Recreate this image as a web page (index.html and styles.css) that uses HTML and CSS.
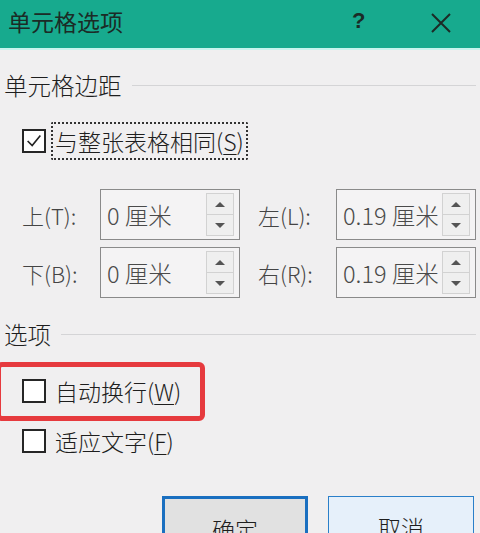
FILE: index.html
```html
<!DOCTYPE html>
<html lang="zh-CN">
<head>
<meta charset="utf-8">
<title>单元格选项</title>
<link rel="stylesheet" href="styles.css">
</head>
<body>
<div class="dialog">
  <div class="titlebar">
    <span class="title">单元格选项</span>
    <span class="help">?</span>
    <span class="close">
      <svg width="22" height="22" viewBox="0 0 22 22"><path d="M2 2 L20 20 M20 2 L2 20" stroke="#1c2a26" stroke-width="2" fill="none"/></svg>
    </span>
  </div>
  <div class="content">
    <div class="section-head"><span class="section-label">单元格边距</span><span class="rule"></span></div>
    <div class="check-row first">
      <span class="checkbox">
        <svg width="22" height="22" viewBox="0 0 22 22"><path d="M4 11 L9 16 L18 5" stroke="#222" stroke-width="1.8" fill="none"/></svg>
      </span>
      <span class="check-label focus">与整张表格相同(<u>S</u>)</span>
    </div>
    <div class="margins">
      <span class="field-label">上(T):</span>
      <div class="spin"><span class="spin-value">0 厘米</span><span class="spin-btns"><span class="sb up"></span><span class="sb down"></span></span></div>
      <span class="field-label">左(L):</span>
      <div class="spin"><span class="spin-value">0.19 厘米</span><span class="spin-btns"><span class="sb up"></span><span class="sb down"></span></span></div>
      <span class="field-label">下(B):</span>
      <div class="spin"><span class="spin-value">0 厘米</span><span class="spin-btns"><span class="sb up"></span><span class="sb down"></span></span></div>
      <span class="field-label">右(R):</span>
      <div class="spin"><span class="spin-value">0.19 厘米</span><span class="spin-btns"><span class="sb up"></span><span class="sb down"></span></span></div>
    </div>
    <div class="section-head second"><span class="section-label">选项</span><span class="rule"></span></div>
    <div class="options">
      <div class="highlight"></div>
      <div class="check-row wrap">
        <span class="checkbox"></span>
        <span class="check-label">自动换行(<u>W</u>)</span>
      </div>
      <div class="check-row fit">
        <span class="checkbox"></span>
        <span class="check-label">适应文字(<u>F</u>)</span>
      </div>
    </div>
    <div class="buttons">
      <div class="btn primary">确定</div>
      <div class="btn">取消</div>
    </div>
  </div>
</div>
</body>
</html>
```

FILE: styles.css
```css
html, body {
  margin: 0;
  padding: 0;
}
body {
  width: 480px;
  height: 533px;
  overflow: hidden;
  background: #f0eff0;
  font-family: "Noto Sans CJK SC", "Noto Sans", sans-serif;
  font-weight: 300;
  color: #1e1e1e;
}
.dialog {
  width: 480px;
}
.titlebar {
  height: 50px;
  background: #17aa8e;
  border-bottom: 2px solid #c8f4ee;
  box-sizing: border-box;
  display: flex;
  align-items: center;
  padding: 0 0 6px 8px;
}
.title {
  font-size: 23px;
  font-weight: 400;
  color: #1b2b26;
  flex: 1;
}
.help {
  font-family: "Liberation Sans", sans-serif;
  font-size: 22px;
  font-weight: bold;
  color: #1b2b26;
  width: 22px;
  margin-right: 56px;
}
.close {
  display: flex;
  margin-right: 28px;
  margin-top: 4px;
}
.content {
  padding: 0 4px;
}
.section-head {
  display: flex;
  align-items: center;
  height: 30px;
  margin-top: 20px;
}
.section-label {
  font-size: 23.5px;
  color: #1e1e1e;
  line-height: 30px;
}
.rule {
  flex: 1;
  border-top: 1px solid #d4d4d6;
  margin-left: 10px;
}
.check-row {
  display: flex;
  align-items: center;
  padding-left: 18px;
}
.check-row.first {
  margin-top: 22px;
  height: 38px;
}
.checkbox {
  width: 24px;
  height: 24px;
  box-sizing: border-box;
  border: 2px solid #262626;
  background: #ffffff;
  display: flex;
  align-items: center;
  justify-content: center;
  flex: none;
}
.check-label {
  font-size: 23px;
  color: #1e1e1e;
  margin-left: 7px;
  line-height: 34px;
  padding: 0 2px;
  white-space: nowrap;
}
.check-label u {
  text-decoration-thickness: 1px;
  text-underline-offset: 3px;
}
.check-label.focus {
  border: 2px dotted #333;
  border-radius: 2px;
  margin-left: 5px;
}
.margins {
  display: grid;
  grid-template-columns: 78px 140px 96px 140px;
  grid-auto-rows: 51px;
  row-gap: 7px;
  align-items: center;
  padding-left: 18px;
  margin-top: 29px;
}
.field-label {
  font-size: 22px;
  color: #444;
  white-space: nowrap;
}
.margins .field-label:nth-child(3),
.margins .field-label:nth-child(7) {
  padding-left: 18px;
}
.spin {
  height: 51px;
  box-sizing: border-box;
  border: 1px solid #8a8a8a;
  background: #f4f3f4;
  display: flex;
  align-items: center;
  overflow: hidden;
}
.spin-value {
  font-size: 23.5px;
  color: #4a4a4a;
  padding-left: 6px;
  white-space: nowrap;
  flex: 1;
  overflow: hidden;
}
.spin-btns {
  display: flex;
  flex-direction: column;
  width: 28px;
  margin-right: 5px;
  flex: none;
}
.sb {
  height: 20px;
  border: 1px solid #d2d2d2;
  background: #efefef;
  display: flex;
  align-items: center;
  justify-content: center;
}
.sb.down {
  border-top: none;
}
.sb.up::before {
  content: "";
  border-left: 5px solid transparent;
  border-right: 5px solid transparent;
  border-bottom: 5px solid #555;
}
.sb.down::before {
  content: "";
  border-left: 5px solid transparent;
  border-right: 5px solid transparent;
  border-top: 5px solid #555;
}
.section-head.second {
  margin-top: 23px;
  height: 26px;
}
.options {
  position: relative;
  margin-top: 15px;
  padding-top: 11px;
}
.highlight {
  position: absolute;
  left: -8px;
  top: 0;
  width: 209px;
  height: 59px;
  box-sizing: border-box;
  border: 5px solid #e63a3e;
  border-radius: 6px;
}
.check-row.wrap {
  height: 36px;
}
.check-row.fit {
  height: 36px;
  margin-top: 14px;
}
.buttons {
  display: flex;
  justify-content: flex-end;
  gap: 20px;
  margin-top: 37px;
  padding-right: 2px;
}
.btn {
  width: 146px;
  height: 60px;
  box-sizing: border-box;
  border: 1px solid #2a7fc9;
  background: #e6f0fa;
  font-size: 23px;
  text-align: center;
  line-height: 56px;
  padding-top: 2px;
  color: #1e1e1e;
}
.btn.primary {
  border: 3px solid #1a6fc0;
  background: #e1e1e1;
}
```
